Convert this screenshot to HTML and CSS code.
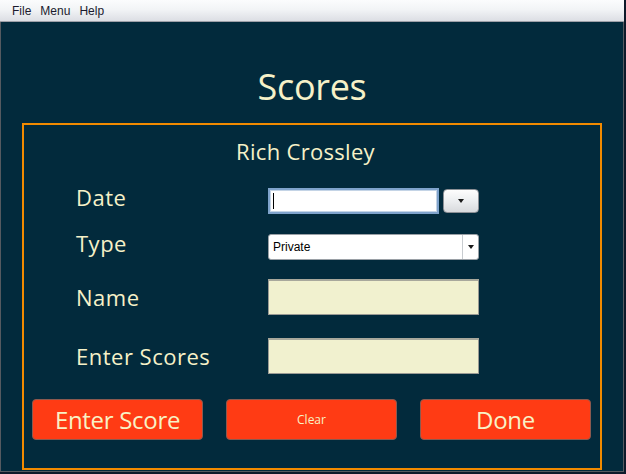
FILE: index.html
```html
<!DOCTYPE html>
<html>
<head>
<meta charset="utf-8">
<link rel="stylesheet" href="styles.css">
</head>
<body>
<div class="window">
  <div class="menubar">
    <span class="menu-item">File</span>
    <span class="menu-item">Menu</span>
    <span class="menu-item">Help</span>
  </div>
  <div class="content">
    <h1 class="title">Scores</h1>
    <div class="panel">
      <div class="player">Rich Crossley</div>
      <div class="form">
        <div class="row row-date">
          <label class="label label-up">Date</label>
          <div class="controls">
            <div class="date-field"><span class="caret"></span></div>
            <div class="date-btn"><span class="tri"></span></div>
          </div>
        </div>
        <div class="row row-type">
          <label class="label label-up">Type</label>
          <div class="combo">
            <span class="combo-text">Private</span>
            <span class="combo-arrow"><span class="tri"></span></span>
          </div>
        </div>
        <div class="row row-name">
          <label class="label">Name</label>
          <div class="cream-field"></div>
        </div>
        <div class="row row-scores">
          <label class="label">Enter Scores</label>
          <div class="cream-field"></div>
        </div>
      </div>
      <div class="buttons">
        <div class="btn btn-big">Enter Score</div>
        <div class="btn btn-small">Clear</div>
        <div class="btn btn-big">Done</div>
      </div>
    </div>
  </div>
</div>
</body>
</html>
```

FILE: styles.css
```css
html, body {
  margin: 0;
  padding: 0;
  width: 626px;
  height: 474px;
  overflow: hidden;
  background: #0d1a2a;
}

.window {
  width: 624px;
  height: 472px;
  box-sizing: border-box;
  border-left: 1px solid #555a60;
  border-right: 1px solid #555a60;
  border-bottom: 1px solid #555a60;
  background: #022a3c;
  display: flex;
  flex-direction: column;
}

.menubar {
  height: 22px;
  box-sizing: border-box;
  border-bottom: 1px solid #9ea0a8;
  background: linear-gradient(#fbfcfd, #f2f4f6 45%, #dcdee4);
  display: flex;
  align-items: center;
  padding-left: 12px;
  gap: 9px;
  font-family: "Liberation Sans", Arial, sans-serif;
  font-size: 12px;
  color: #1a1a2e;
  margin-left: -1px;
  margin-right: -1px;
}

.menu-item {
  display: block;
}

.content {
  flex: 1;
  display: flex;
  flex-direction: column;
  align-items: flex-start;
  font-family: "Open Sans", "Noto Sans", sans-serif;
  color: #f6f1c8;
}

.title {
  margin: 0;
  align-self: stretch;
  text-align: center;
  font-weight: normal;
  font-size: 36px;
  line-height: 40px;
  padding-top: 45px;
  height: 56px;
  letter-spacing: -0.3px;
}

.panel {
  margin-left: 21px;
  width: 576px;
  height: 343px;
  border: 2px solid #f28a00;
  display: flex;
  flex-direction: column;
}

.player {
  text-align: center;
  font-size: 22px;
  line-height: 26px;
  padding-top: 13px;
  padding-right: 13px;
  letter-spacing: 0.3px;
}

.form {
  display: flex;
  flex-direction: column;
  padding-left: 52px;
  margin-top: 24px;
}

.row {
  display: flex;
  align-items: center;
}

.label {
  width: 192px;
  font-size: 22px;
  line-height: 26px;
  letter-spacing: 0.5px;
}

.label-up {
  padding-bottom: 8px;
}

.row-date { height: 26px; }
.row-type { height: 26px; margin-top: 20px; }
.row-name { height: 36px; margin-top: 19px; }
.row-scores { height: 36px; margin-top: 23px; }

.controls {
  display: flex;
  align-items: center;
  gap: 4px;
}

.date-field {
  width: 171px;
  height: 26px;
  box-sizing: border-box;
  background: #ffffff;
  border: 2px solid #7fa3cc;
  box-shadow: inset 0 0 0 1px #c4d4e6;
  display: flex;
  align-items: center;
  padding-left: 3px;
}

.caret {
  width: 1px;
  height: 16px;
  background: #000;
}

.date-btn {
  width: 36px;
  height: 24px;
  box-sizing: border-box;
  border: 1px solid #8c9096;
  border-radius: 4px;
  background: linear-gradient(#fdfdfd, #eceef0 50%, #d8dadd);
  display: flex;
  align-items: center;
  justify-content: center;
}

.tri {
  width: 0;
  height: 0;
  border-left: 3.5px solid transparent;
  border-right: 3.5px solid transparent;
  border-top: 4px solid #1a1a1a;
}

.combo {
  width: 211px;
  height: 26px;
  box-sizing: border-box;
  background: #ffffff;
  border: 1px solid #9aa0a6;
  border-radius: 3px;
  display: flex;
  align-items: center;
  font-family: "Liberation Sans", Arial, sans-serif;
  font-size: 12px;
  color: #000;
}

.combo-text {
  flex: 1;
  padding-left: 4px;
}

.combo-arrow {
  width: 15px;
  height: 100%;
  border-left: 1px solid #c8ccd0;
  display: flex;
  align-items: center;
  justify-content: center;
}

.cream-field {
  width: 211px;
  height: 36px;
  box-sizing: border-box;
  background: #f1f1cf;
  border: 1px solid #9a9a94;
  border-top: 2px solid #a8a89c;
}

.buttons {
  display: flex;
  gap: 23px;
  padding-left: 8px;
  margin-top: 25px;
}

.btn {
  width: 171px;
  height: 41px;
  box-sizing: border-box;
  background: #ff3b14;
  border: 1px solid #8a5a50;
  border-radius: 4px;
  display: flex;
  align-items: center;
  justify-content: center;
  color: #f8f2c6;
}

.btn-big {
  font-size: 24px;
  letter-spacing: -0.3px;
}

.btn-small {
  font-size: 12px;
}
```
